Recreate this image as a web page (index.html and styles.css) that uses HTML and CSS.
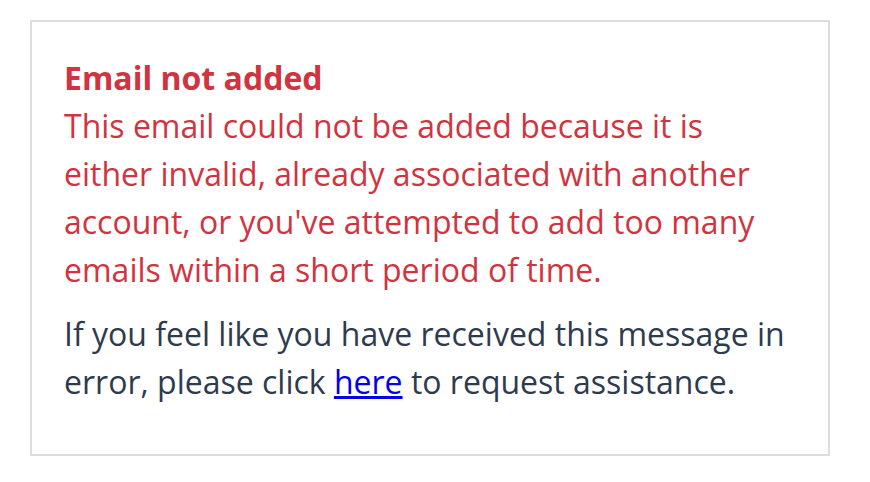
FILE: index.html
```html
<!DOCTYPE html>
<html>
<head>
<meta charset="utf-8">
<link rel="stylesheet" href="styles.css">
</head>
<body>
<div class="notice">
  <div class="error">
    <strong class="error-title">Email not added</strong>
    <p class="error-text">This email could not be added because it is either invalid, already associated with another account, or you've attempted to add too many emails within a short period of time.</p>
  </div>
  <p class="help">If you feel like you have received this message in error, please click <a href="#">here</a> to request assistance.</p>
</div>
</body>
</html>
```
FILE: styles.css
```css
html, body {
  margin: 0;
  padding: 0;
  background: #fff;
}
body {
  padding: 20px 0 0 30px;
  font-family: "Open Sans", "Noto Sans", sans-serif;
  font-size: 32px;
  line-height: 48px;
}
.notice {
  box-sizing: border-box;
  width: 800px;
  border: 2px solid #dddddd;
  padding: 32px 32px 32px 32px;
}
.error {
  color: #d13440;
}
.error-title {
  display: block;
  font-weight: 700;
}
.error-text {
  margin: 0 0 16px 0;
}
.help {
  margin: 0 0 16px 0;
  color: #2e3b4e;
}
.help a {
  color: #0000ee;
}
```
